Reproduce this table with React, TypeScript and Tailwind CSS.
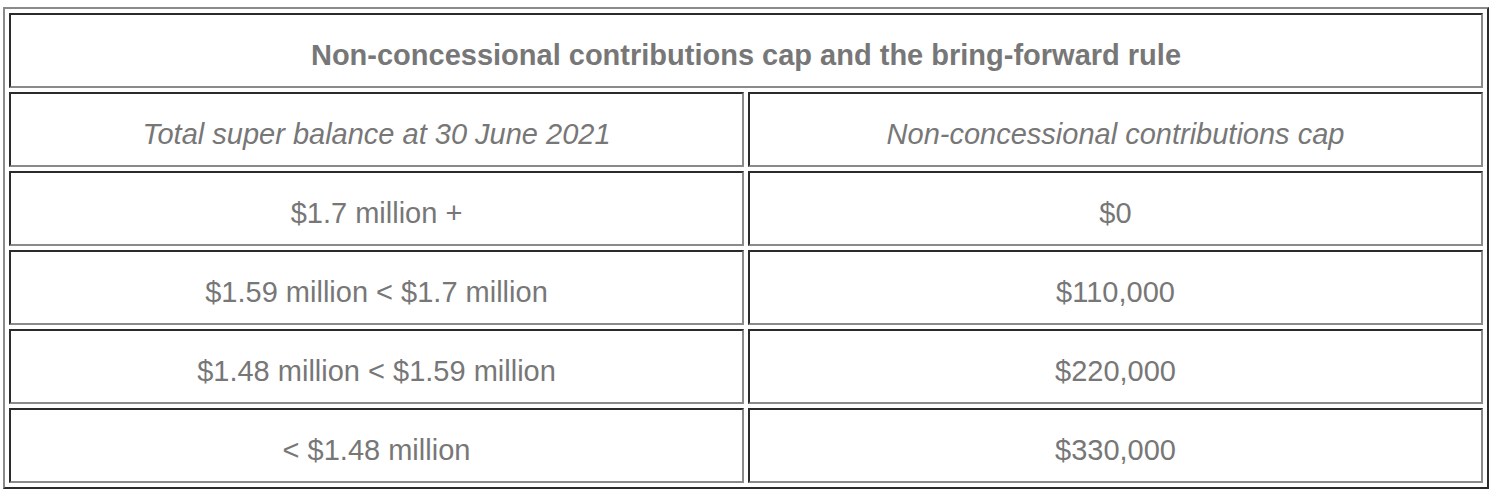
export default function App() {
  const rows: [string, string][] = [
    ["$1.7 million +", "$0"],
    ["$1.59 million < $1.7 million", "$110,000"],
    ["$1.48 million < $1.59 million", "$220,000"],
    ["< $1.48 million", "$330,000"],
  ];
  const cell =
    "h-[75px] border-2 border-t-[#2b2b2b] border-l-[#2b2b2b] border-b-[#8a8a8a] border-r-[#8a8a8a] text-center align-middle p-0 pt-[10px]";
  return (
    <div className="bg-white w-[1493px] h-[494px] pl-[3px] pt-[7px]" style={{ fontFamily: '"Liberation Sans", Arial, sans-serif' }}>
      <table className="w-[1486px] border-separate border-spacing-[4px] border-2 border-t-[#8a8a8a] border-l-[#8a8a8a] border-b-[#2b2b2b] border-r-[#2b2b2b] text-[#777777] text-[29px] leading-[1.2] table-fixed">
        <tbody>
          <tr>
            <td colSpan={2} className={cell + " font-bold"}>
              Non-concessional contributions cap and the bring-forward rule
            </td>
          </tr>
          <tr>
            <td className={cell + " italic"}>Total super balance at 30 June 2021</td>
            <td className={cell + " italic"}>Non-concessional contributions cap</td>
          </tr>
          {rows.map(([a, b]) => (
            <tr key={a}>
              <td className={cell}>{a}</td>
              <td className={cell}>{b}</td>
            </tr>
          ))}
        </tbody>
      </table>
    </div>
  );
}
